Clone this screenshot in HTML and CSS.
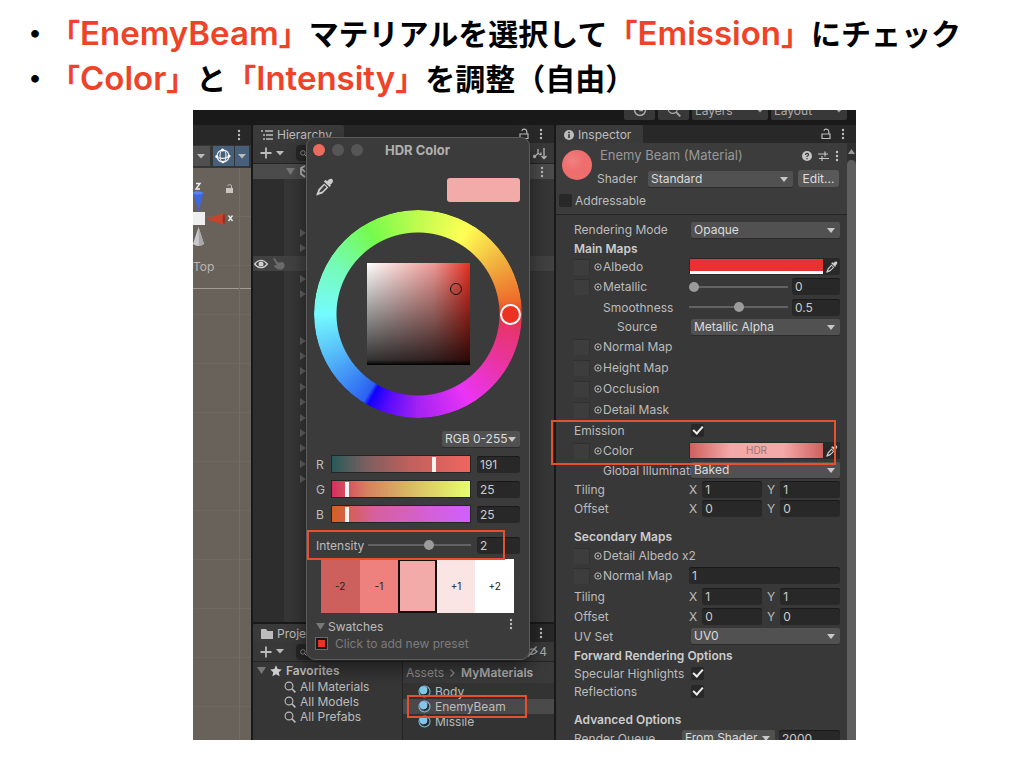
FILE: index.html
```html
<!DOCTYPE html>
<html lang="ja">
<head>
<meta charset="utf-8">
<title>EnemyBeam マテリアル</title>
<link rel="stylesheet" href="styles.css">
</head>
<body>
<svg class="defs" width="0" height="0" aria-hidden="true">
  <symbol id="i-dots" viewBox="0 0 4 12"><circle cx="2" cy="2" r="1.2"/><circle cx="2" cy="6" r="1.2"/><circle cx="2" cy="10" r="1.2"/></symbol>
  <symbol id="i-lock" viewBox="0 0 10 12"><path d="M1 6h8v4.5H1zM7.8 6V3.6a2.6 2.6 0 0 0-5-.8" fill="none" stroke="currentColor" stroke-width="1.2"/></symbol>
  <symbol id="i-search" viewBox="0 0 12 12"><circle cx="5" cy="5" r="3.9" fill="none" stroke="currentColor" stroke-width="1.1"/><path d="M7.8 7.8 11.4 11.4" stroke="currentColor" stroke-width="1.6"/></symbol>
  <symbol id="i-plus" viewBox="0 0 12 12"><path d="M6 .5v11M.5 6h11" stroke="currentColor" stroke-width="1.8"/></symbol>
  <symbol id="i-down" viewBox="0 0 8 5"><path d="M0 0h8L4 4.6z"/></symbol>
  <symbol id="i-fold" viewBox="0 0 9 7"><path d="M0 0h9L4.500 7z"/></symbol>
  <symbol id="i-pipette" viewBox="0 0 16 16"><path d="M10.2 2.600c1.400-1.800 3-2.400 4.200-1.600 1.200 1 .9 2.900-1.200 4.500l-.6.5.7.8-1.300 1.300-5-5L8.300 1.800z"/><path d="M7.300 4.800 2.500 9.600C1.400 10.800 2 12 .6 13.800L.3 15.500l1.800-.3c1.600-1.400 3-.8 4-1.900L11 8.500 7.300 4.800zM7.500 6.500 9.300 8.300 5.400 12c-.8.6-1.800.4-2.400.8.3-.8.200-1.600.9-2.200z" fill-rule="evenodd"/></symbol>
  <symbol id="i-pick" viewBox="0 0 8 8"><circle cx="4" cy="4" r="3.2" fill="none" stroke="currentColor"/><circle cx="4" cy="4" r="1"/></symbol>
  <symbol id="i-ball" viewBox="0 0 14 14"><circle cx="7" cy="7" r="6" fill="none" stroke="#7db9dc" stroke-width="1.1"/><circle cx="6" cy="5.600" r="4.300" fill="#86c5ea"/><path d="M10.800 4.500c.8 3-1 6-4.300 6.300" fill="none" stroke="#222" stroke-width="1.200"/></symbol>
</svg>

<main class="slide">
  <ul class="points">
    <li><em>「<span class="latin">EnemyBeam</span>」</em>マテリアルを選択して<em>「<span class="latin">Emission</span>」</em>にチェック</li>
    <li><em>「<span class="latin">Color</span>」</em>と<em>「<span class="latin">Intensity</span>」</em>を調整（自由）</li>
  </ul>

  <section class="editor" lang="en">
    <header class="topbar">
      <button class="top-btn" aria-label="History"><svg width="14" height="14" viewBox="0 0 14 14"><circle cx="7" cy="7" r="5.500" fill="none" stroke="currentColor" stroke-width="1.500"/><path d="M7 4v3.500h3" fill="none" stroke="currentColor" stroke-width="1.500"/></svg></button>
      <button class="top-btn" aria-label="Search"><svg width="14" height="14"><use href="#i-search"/></svg></button>
      <button class="top-btn wide">Layers<svg width="8" height="5"><use href="#i-down"/></svg></button>
      <button class="top-btn wide">Layout<svg width="8" height="5"><use href="#i-down"/></svg></button>
    </header>

    <div class="panes">
      <section class="scene">
        <div class="tabbar"><span class="push"></span><svg class="dots" width="4" height="12"><use href="#i-dots"/></svg></div>
        <div class="scene-tools">
          <button class="tool" aria-label="More"><svg width="8" height="5"><use href="#i-down"/></svg></button>
          <button class="tool on" aria-label="Gizmos"><svg width="16" height="16" viewBox="0 0 16 16" fill="none" stroke="#eee" stroke-width="1.100"><circle cx="8" cy="8" r="6"/><ellipse cx="8" cy="8" rx="3" ry="6"/><path d="M1 9c4 2 10 2 14-1"/><g fill="#fff" stroke="none"><circle cx="7.500" cy="2" r="1.500"/><circle cx="1.800" cy="8.500" r="1.500"/><circle cx="14" cy="8" r="1.500"/><circle cx="8" cy="14" r="1.300"/></g></svg></button>
          <button class="tool on narrow" aria-label="Gizmo options"><svg width="8" height="5"><use href="#i-down"/></svg></button>
        </div>
        <div class="viewport">
          <svg class="gizmo" width="58" height="82" viewBox="0 0 58 82">
            <path d="M3 15.500 7 15.500 3 21 7 21" fill="none" stroke="#eee" stroke-width="1.400"/>
            <path d="M0 24.500Q5 22 10.500 25L5.500 43Z" fill="#3d69e0"/><path d="M0 24.500Q5 22 10.500 25 5 28 0 25z" fill="#5a83f0"/>
            <path d="M0 44h12v13H0z" fill="#efefef"/>
            <path d="M13 51 31 45Q34 51 31 57Z" fill="#c8432b"/><path d="M31 45Q34 51 31 57 28 51 31 45z" fill="#953323"/>
            <path d="M35.500 47.500 39.500 53M39.500 47.500 35.500 53" stroke="#eee" stroke-width="1.300"/>
            <path d="M5.500 59 11 76Q5 80 0 76Z" fill="#c9c9c9"/><path d="M5.500 59 11 76Q8 78 6 78z" fill="#a8a8a8"/>
            <path d="M33 20h7v5h-7z" fill="#c9c6c2"/><path d="M34.500 17.500q2.500-2 4 0V20" fill="none" stroke="#bbb" stroke-width="1"/>
          </svg>
          <span class="view-name">Top</span>
        </div>
      </section>

      <div class="middle">
        <section class="hierarchy">
          <div class="tabbar">
            <div class="tab hier-tab"><svg width="12" height="10" viewBox="0 0 12 10"><path d="M0 1h2M4 1h8M2 5h2M5 5h7M2 9h2M5 9h7" stroke="currentColor" stroke-width="1.300"/></svg>Hierarchy</div>
            <span class="push"></span>
            <svg width="10" height="12"><use href="#i-lock"/></svg>
            <svg class="dots" width="4" height="12"><use href="#i-dots"/></svg>
          </div>
          <div class="toolbar">
            <svg width="12" height="12"><use href="#i-plus"/></svg><svg width="8" height="5"><use href="#i-down"/></svg>
            <span class="searchbox"><svg width="7" height="7"><use href="#i-search"/></svg></span>
            <svg width="14" height="13" viewBox="0 0 14 13" fill="none" stroke="currentColor" stroke-width="1.300"><path d="M1.500 9.500 5 6.500V2M5 6.500l3 1.500M8 5.500V8M11 1v10M8.500 9l2.500 2.500L13.500 9"/><circle cx="1.500" cy="9.500" r="1" fill="currentColor"/></svg>
          </div>
          <div class="scene-row"><svg width="9" height="7"><use href="#i-fold"/></svg><svg width="13" height="13" viewBox="0 0 13 13" fill="none" stroke="#bbb" stroke-width="1.700"><path d="M6 1 2 3v6l4 3M2 3l4 4"/></svg><span class="push"></span><svg class="dots" width="4" height="12"><use href="#i-dots"/></svg></div>
          <div class="tree">
            <i></i><i></i><i></i><i class="arr"></i><i class="arr"></i>
            <i class="hot"><svg width="14" height="10" viewBox="0 0 14 10"><path d="M.5 5Q7-2.500 13.500 5 7 12.500.5 5z" fill="none" stroke="#d0d0d0" stroke-width="1.200"/><circle cx="7" cy="5" r="2.500" fill="#d0d0d0"/></svg><svg width="13" height="12" viewBox="0 0 13 12"><path d="M1 .5 2.500 0 6 4.500 10.500 4 12.500 6v3L10 11.500H6L2 8.500 2.500 7 5 7.500z" fill="#6a6a6a"/></svg></i>
            <i class="arr"></i><i class="arr"></i><i></i><i></i>
            <i class="arr"></i><i class="arr"></i><i class="arr"></i><i class="arr"></i><i class="arr"></i>
            <i class="arr"></i><i class="arr"></i><i class="arr"></i><i class="arr"></i><i class="arr"></i>
          </div>
        </section>

        <section class="project">
          <div class="tabbar">
            <div class="tab proj-tab"><svg width="12" height="10" viewBox="0 0 12 10"><path d="M0 0h5l1.500 2H12v8H0z"/></svg>Project</div>
            <span class="push"></span>
            <svg class="dots" width="4" height="12"><use href="#i-dots"/></svg>
          </div>
          <div class="toolbar">
            <svg width="12" height="12"><use href="#i-plus"/></svg><svg width="8" height="5"><use href="#i-down"/></svg>
            <span class="searchbox"><svg width="7" height="7"><use href="#i-search"/></svg></span>
            <span class="hidden-count"><svg width="12" height="11" viewBox="0 0 12 11" fill="none" stroke="currentColor" stroke-width="1.300"><path d="M1 6Q6 0 11 5.500 6 11 1 6zM2 10.500 10.500.5"/></svg>4</span>
          </div>
          <div class="browser">
            <ul class="favorites">
              <li class="fav-head"><svg width="9" height="7"><use href="#i-fold"/></svg><svg class="star" width="12" height="12" viewBox="0 0 12 12"><path d="M6 .3 7.700 4l4.100.5-3 2.800.8 4L6 9.300l-3.600 2 .8-4-3-2.800L4.300 4z"/></svg>Favorites</li>
              <li><svg width="12" height="12"><use href="#i-search"/></svg>All Materials</li>
              <li><svg width="12" height="12"><use href="#i-search"/></svg>All Models</li>
              <li><svg width="12" height="12"><use href="#i-search"/></svg>All Prefabs</li>
            </ul>
            <div class="assets">
              <nav class="crumbs"><span>Assets</span><svg width="5" height="8" viewBox="0 0 5 8"><path d="M.5.5 4 4 .5 7.500" fill="none" stroke="currentColor" stroke-width="1.200"/></svg><b>MyMaterials</b></nav>
              <ul class="files">
                <li><svg width="13" height="13"><use href="#i-ball"/></svg>Body</li>
                <li class="selected"><svg width="13" height="13"><use href="#i-ball"/></svg>EnemyBeam<span class="mark"></span></li>
                <li><svg width="13" height="13"><use href="#i-ball"/></svg>Missile</li>
              </ul>
            </div>
          </div>
        </section>
      </div>

      <section class="inspector">
        <div class="tabbar">
          <div class="tab insp-tab"><svg width="10" height="10" viewBox="0 0 10 10"><circle cx="5" cy="5" r="5"/><path d="M5 4.300V8M5 1.800v1.500" stroke="#333" stroke-width="1.600"/></svg>Inspector</div>
          <span class="push"></span>
          <svg width="10" height="12"><use href="#i-lock"/></svg>
          <svg class="dots" width="4" height="12"><use href="#i-dots"/></svg>
        </div>
        <div class="insp-body">
          <div class="insp-main">
            <header class="mat-head">
              <span class="preview"></span>
              <div class="mat-info">
                <div class="mat-title">Enemy Beam (Material)<span class="push"></span>
                  <svg width="10" height="10" viewBox="0 0 10 10"><circle cx="5" cy="5" r="5"/><path d="M3.400 3.800Q3.600 2.300 5 2.300T6.600 3.800Q6.600 4.600 5 5.300V6M5 7v1.300" fill="none" stroke="#333" stroke-width="1.200"/></svg>
                  <svg width="11" height="10" viewBox="0 0 11 10"><path d="M0 3h10M7 .5v5M1 7.500h10M4 5v5" stroke="currentColor" stroke-width="1.200"/></svg>
                  <svg width="4" height="12"><use href="#i-dots"/></svg>
                </div>
                <div class="shader"><label for="shader">Shader</label><span class="select"><select id="shader"><option>Standard</option></select></span><button class="edit">Edit...</button></div>
              </div>
              <label class="addr"><input type="checkbox" class="check">Addressable</label>
            </header>

            <form class="props">
              <div class="row"><label class="name" for="mode">Rendering Mode</label><span class="select"><select id="mode"><option>Opaque</option></select></span></div>
              <h3 class="row tight">Main Maps</h3>
              <div class="row"><span class="name map"><i class="slot"></i><svg width="8" height="8"><use href="#i-pick"/></svg>Albedo</span><span class="color"><span class="fill albedo"></span><svg width="12" height="12"><use href="#i-pipette"/></svg></span></div>
              <div class="row maprow"><label class="name map" for="metal"><i class="slot"></i><svg width="8" height="8"><use href="#i-pick"/></svg>Metallic</label><input id="metal" type="range" class="slider" min="0" max="1" step="0.1" value="0"><input class="num" value="0" aria-label="Metallic value"></div>
              <div class="row tall"><label class="name sub" for="smooth">Smoothness</label><input id="smooth" type="range" class="slider" min="0" max="1" step="0.1" value="0.5"><input class="num" value="0.5" aria-label="Smoothness value"></div>
              <div class="row"><label class="name subsub" for="src">Source</label><span class="select"><select id="src"><option>Metallic Alpha</option></select></span></div>
              <div class="row maprow"><span class="name map"><i class="slot"></i><svg width="8" height="8"><use href="#i-pick"/></svg>Normal Map</span></div>
              <div class="row maprow"><span class="name map"><i class="slot"></i><svg width="8" height="8"><use href="#i-pick"/></svg>Height Map</span></div>
              <div class="row maprow"><span class="name map"><i class="slot"></i><svg width="8" height="8"><use href="#i-pick"/></svg>Occlusion</span></div>
              <div class="row maprow"><span class="name map"><i class="slot"></i><svg width="8" height="8"><use href="#i-pick"/></svg>Detail Mask</span></div>
              <div class="emission">
                <div class="row maprow"><label class="name" for="emis">Emission</label><input id="emis" type="checkbox" class="check" checked></div>
                <div class="row"><span class="name map"><i class="slot"></i><svg width="8" height="8"><use href="#i-pick"/></svg>Color</span><span class="color"><span class="fill hdr">HDR</span><svg width="12" height="12"><use href="#i-pipette"/></svg></span></div>
                <span class="mark"></span>
              </div>
              <div class="row tall"><label class="name sub" for="gi">Global Illuminati</label><span class="select"><select id="gi"><option>Baked</option></select></span></div>
              <div class="row"><span class="name">Tiling</span><label class="axis">X<input class="num" value="1"></label><label class="axis">Y<input class="num" value="1"></label></div>
              <div class="row"><span class="name">Offset</span><label class="axis">X<input class="num" value="0"></label><label class="axis">Y<input class="num" value="0"></label></div>
              <h3 class="row spaced">Secondary Maps</h3>
              <div class="row"><span class="name map"><i class="slot"></i><svg width="8" height="8"><use href="#i-pick"/></svg>Detail Albedo x2</span></div>
              <div class="row maprow"><label class="name map" for="nm2"><i class="slot"></i><svg width="8" height="8"><use href="#i-pick"/></svg>Normal Map</label><input id="nm2" class="num full" value="1"></div>
              <div class="row tall"><span class="name">Tiling</span><label class="axis">X<input class="num" value="1"></label><label class="axis">Y<input class="num" value="1"></label></div>
              <div class="row tall"><span class="name">Offset</span><label class="axis">X<input class="num" value="0"></label><label class="axis">Y<input class="num" value="0"></label></div>
              <div class="row tall"><label class="name" for="uv">UV Set</label><span class="select"><select id="uv"><option>UV0</option></select></span></div>
              <h3 class="row tight">Forward Rendering Options</h3>
              <div class="row tight"><label class="name" for="spec">Specular Highlights</label><input id="spec" type="checkbox" class="check" checked></div>
              <div class="row"><label class="name" for="refl">Reflections</label><input id="refl" type="checkbox" class="check" checked></div>
              <h3 class="row spaced">Advanced Options</h3>
              <div class="row tight"><label class="name queue" for="rq">Render Queue</label><span class="select"><select id="rq"><option>From Shader</option></select></span><input class="num" value="2000" aria-label="Queue value"></div>
            </form>
          </div>
          <div class="scroll"><svg width="7" height="5" viewBox="0 0 7 5"><path d="M0 5h7L3.500 0z"/></svg><span class="thumb"></span></div>
        </div>
      </section>
    </div>

    <section class="picker" aria-label="HDR Color">
      <header class="titlebar"><i class="light close"></i><i class="light"></i><i class="light"></i><h2>HDR Color</h2></header>
      <div class="current"><svg width="18" height="18"><use href="#i-pipette"/></svg><span class="chip"></span></div>
      <div class="wheel"><span class="ring"></span><span class="sv"><i class="sv-dot"></i></span><i class="hue-dot"></i></div>
      <span class="select rgb-mode"><select aria-label="Color mode"><option>RGB 0-255</option></select></span>
      <div class="channel"><label for="r">R</label><input id="r" type="range" class="bar bar-r" min="0" max="255" value="191"><input class="num" value="191" aria-label="Red"></div>
      <div class="channel"><label for="g">G</label><input id="g" type="range" class="bar bar-g" min="0" max="255" value="25"><input class="num" value="25" aria-label="Green"></div>
      <div class="channel"><label for="b">B</label><input id="b" type="range" class="bar bar-b" min="0" max="255" value="25"><input class="num" value="25" aria-label="Blue"></div>
      <div class="channel intensity"><label for="int">Intensity</label><input id="int" type="range" class="slider" min="-10" max="10" value="2"><input class="num" value="2" aria-label="Intensity value"><span class="mark"></span></div>
      <div class="stops"><button class="s1">-2</button><button class="s2">-1</button><button class="s3" aria-label="0"></button><button class="s4">+1</button><button class="s5">+2</button></div>
      <div class="swatch-head"><svg width="9" height="7"><use href="#i-fold"/></svg>Swatches<span class="push"></span><svg class="dots" width="4" height="12"><use href="#i-dots"/></svg></div>
      <div class="preset"><i class="preset-box"></i>Click to add new preset</div>
    </section>
  </section>
</main>
</body>
</html>
```
FILE: styles.css
```css
* { box-sizing: border-box; }
body { margin: 0; background: #fff; }
.defs { position: absolute; }
svg { display: block; flex: none; }
svg:not([fill]) { fill: currentColor; }
i { font-style: normal; }
button, input, select { font: inherit; color: inherit; border: 0; margin: 0; padding: 0; background: none; }
h2, h3, ul { margin: 0; padding: 0; }
.push { flex: 1; }

.slide { height: 100vh; display: flex; flex-direction: column; padding: 10px 168px 28px 193px; }
.points {
  list-style: none; margin: 0 -168px 10px -193px; padding-left: 20px;
  font: 700 30px/45px "Noto Sans CJK JP", sans-serif; color: #000; white-space: nowrap;
}
.points li { display: flex; height: 45px; align-items: baseline; }
.points li::before { content: "・"; width: 30px; }
.points em { font-style: normal; color: #ee4328; }
.latin { font-family: Inter, "Liberation Sans", sans-serif; font-size: 33px; font-weight: 600; }

.editor {
  position: relative; flex: 1; min-height: 0; display: flex; flex-direction: column;
  background: #191919; color: #bcbcbc; font: 12px/15px Inter, sans-serif;
}
.topbar { height: 15px; overflow: hidden; display: flex; justify-content: flex-end; align-items: flex-end; gap: 3px; padding: 0 9px 5px; flex: none; background: #191919; }
.top-btn { height: 20px; width: 31px; flex: none; background: #383838; border-radius: 2px; display: flex; align-items: center; justify-content: center; color: #aaa; }
.top-btn.wide { width: 76px; justify-content: space-between; padding: 0 4px 0 3px; }

.panes { flex: 1; min-height: 0; display: grid; grid-template-columns: 58px minmax(0, 1fr) 300px; gap: 2px; overflow: hidden; }
.panes > * { min-height: 0; }
.scene, .middle { overflow: hidden; }
.tabbar { height: 18px; flex: none; display: flex; align-items: center; background: #282828; }
.tabbar .dots { margin: 0 11px 0 10px; }
.tab { height: 18px; display: flex; align-items: center; gap: 4px; padding: 1px 8px 0; background: #3a3a3a; border-radius: 2px 2px 0 0; }
.hier-tab, .insp-tab { padding-right: 12px; }
.toolbar { height: 21px; flex: none; display: flex; align-items: center; gap: 4px; padding: 0 7px; background: #383838; border-bottom: 1px solid #242424; }
.searchbox { flex: 1; height: 16px; margin-left: 8px; padding: 5px 4px; background: #262626; border-radius: 4px; }

.scene { display: flex; flex-direction: column; background: #6a635b; }
.scene .tabbar { height: 20px; }
.scene .tabbar .dots { margin-right: 10px; }
.scene-tools { display: flex; height: 23px; padding: 1px 2px 2px 0; background: #353535; }
.tool { display: flex; align-items: center; justify-content: center; width: 17px; background: #505050; }
.tool.on { background: #46607c; width: 22px; margin-left: 3px; }
.tool.on.narrow { width: 14px; margin-left: 1px; }
.viewport {
  flex: 1;
  background: linear-gradient(#736d66, #736d66) 46px 0 / 1px 100% no-repeat,
    linear-gradient(#a09b94, #a09b94) 0 120px / 100% 1px no-repeat,
    repeating-linear-gradient(#69625a 0 48px, #6e6860 48px 49px);
}
.view-name { display: block; color: #b9b5b0; padding-top: 9px; }

.middle { display: flex; flex-direction: column; gap: 2px; }
.hierarchy { flex: 1; min-height: 0; display: flex; flex-direction: column; background: linear-gradient(90deg, #2d2d2d 31px, #363636 31px); }
.scene-row { height: 15px; flex: none; display: flex; align-items: center; gap: 4px; padding-left: 33px; background: #4b4b4b; color: #777; }
.scene-row .dots { margin-right: 10px; color: #bbb; }
.tree { display: grid; grid-template-rows: repeat(20, 1fr); height: 308px; flex: none; }
.tree i { display: flex; align-items: center; gap: 4px; padding-left: 1px; }
.tree .arr::before { content: ""; margin-left: 46px; border: 4px solid transparent; border-left: 6px solid #626262; border-right: 0; }
.tree .hot { background: #414141; }

.project { height: 116px; flex: none; display: flex; flex-direction: column; }
.project .toolbar { height: 20px; }
.hidden-count { display: flex; align-items: center; gap: 1px; color: #aaa; }
.browser { flex: 1; min-height: 0; display: grid; grid-template-columns: 149px minmax(0, 1fr); gap: 1px; background: #242424; }
.favorites, .files { list-style: none; }
.favorites { background: #363636; }
.favorites li { height: 15px; display: flex; align-items: center; gap: 4px; padding-left: 31px; }
.favorites .fav-head { height: 17px; padding-left: 4px; font-weight: 600; }
.fav-head svg:first-child { color: #777; }
.fav-head .star { color: #ccc; }
.assets { background: #333; }
.crumbs { height: 21px; display: flex; align-items: center; gap: 6px; padding-left: 3px; background: #3a3a3a; color: #909090; }
.crumbs b { font-weight: 600; color: #b0b0b0; }
.files { padding-top: 1px; }
.files li { position: relative; height: 15px; display: flex; align-items: center; gap: 4px; padding-left: 15px; }
.files .selected { background: #4a4a4a; }
.mark { position: absolute; z-index: 1; border: 2px solid #e5512f; pointer-events: none; }
.files .mark { left: 4px; width: 120px; top: -4px; bottom: -4px; }

.inspector { display: flex; flex-direction: column; background: #383838; }
.insp-body { flex: 1; min-height: 0; display: grid; grid-template-columns: minmax(0, 1fr) 9px; }
.mat-head { height: 72px; display: grid; grid-template-columns: 30px minmax(0, 1fr); grid-template-rows: 48px 18px; column-gap: 8px; padding: 0 8px 0 6px; background: #3c3c3c; border-bottom: 1px solid #242424; }
.preview { width: 30px; height: 30px; margin-top: 7px; border-radius: 50%; background: radial-gradient(circle at 35% 35%, #f28080, #ee6e6e 40%); }
.mat-title { height: 25px; display: flex; align-items: center; gap: 6px; font-size: 13px; color: #989898; }
.mat-title svg { color: #c4c4c4; }
.shader { display: flex; align-items: center; height: 21px; gap: 5px; margin-left: -3px; }
.shader label { width: 46px; }
.edit { width: 41px; height: 17px; background: #585858; border-radius: 3px; color: #ddd; }
.addr { grid-column: 1 / -1; display: flex; align-items: center; gap: 3px; margin-left: -3px; }

.select { position: relative; flex: 1; height: 16px; margin-left: 2px; background: #515151; border-radius: 2px; box-shadow: 0 1px #2c2c2c; color: #dcdcdc; }
.select select { appearance: none; width: 100%; height: 16px; padding: 0 3px; line-height: 16px; display: block; }
.select::after { content: ""; position: absolute; right: 5px; top: 6px; border: 4px solid transparent; border-top: 5px solid #c8c8c8; border-bottom: 0; }
.shader .select { margin: 0; }
.check { appearance: none; flex: none; width: 13px; height: 13px; margin-left: 2px; background: #282828; border-radius: 2px; display: grid; place-items: center; }
.addr .check { margin: 0; }
.check:checked::before { content: ""; width: 8px; height: 4px; margin-bottom: 3px; border: solid #eee; border-width: 0 0 2px 2px; transform: rotate(-48deg); }
.num { width: 48px; height: 17px; min-width: 0; padding: 0 3px; background: #282828; border-radius: 3px; box-shadow: inset 0 1px #1a1a1a; color: #ccc; }
.slider { appearance: none; flex: 1; min-width: 0; height: 12px; background: linear-gradient(#626262, #626262) center / 100% 2px no-repeat; }
.slider::-webkit-slider-thumb { appearance: none; width: 10px; height: 10px; border-radius: 50%; background: #9b9b9b; }

.props { padding: 5px 7px 0 18px; }
.row { height: 19px; display: flex; align-items: center; }
h3.row { font-size: 12px; font-weight: 600; color: #ccc; }
.row.tight { height: 18px; }
.row.tall { height: 20px; }
.row.maprow { height: 21px; }
.row.spaced { height: 28px; padding-top: 8px; }
.name { flex: none; width: 115px; white-space: nowrap; }
.name.sub { padding-left: 29px; }
.name.subsub { padding-left: 43px; }
.name.queue { width: 106px; }
.name.map { display: flex; align-items: center; gap: 1px; }
.slot { flex: none; width: 16px; height: 16px; margin-right: 3px; background: #3d3d3d; border-top: 1px solid #303030; border-right: 1px solid #333; }
.row .slider + .num { margin-left: 4px; }
.row .queue ~ .num { width: 61px; margin-left: 4px; }
.num.full { flex: 1; }
.axis { flex: 1; display: flex; align-items: center; gap: 5px; }
.axis + .axis { margin-left: 5px; }
.axis .num { flex: 1; }
.color { flex: 1; height: 17px; display: flex; align-items: center; padding: 1px 2px 1px 1px; gap: 3px; background: #292929; border-radius: 2px; }
.color svg { color: #ccc; }
.fill { flex: 1; height: 15px; }
.albedo { background: #e83232; border-bottom: 3px solid #fff; }
.hdr { background: linear-gradient(90deg, #d0605e, #f3a9a8 30%, #f3a9a8 70%, #d0605e); color: #a07474; font-size: 10px; text-align: center; }
.emission { position: relative; }
.emission .mark { left: -23px; right: 4px; top: 0; bottom: -5px; }
.scroll { background: #303030; display: flex; flex-direction: column; align-items: center; padding-top: 6px; color: #999; }
.thumb { width: 9px; flex: 1; margin-top: 6px; background: #5f5f5f; border-radius: 5px 5px 0 0; }

.picker {
  position: absolute; z-index: 2; left: 113px; top: 27px; width: 224px; padding: 0 9px 6px;
  background: #3b3b3b; border: 1px solid #5c5c5c; border-radius: 9px; box-shadow: 0 8px 18px 1px rgba(0, 0, 0, .45);
}
.titlebar { height: 24px; display: flex; align-items: center; gap: 7px; margin-left: -3px; }
.light { width: 12px; height: 12px; border-radius: 50%; background: #565656; }
.light.close { background: #ed6a5e; }
.titlebar h2 { flex: 1; padding-left: 15px; font-size: 13px; font-weight: 700; color: #b0b0b0; }
.current { display: flex; justify-content: space-between; margin-top: 16px; height: 24px; }
.current svg { color: #ccc; }
.chip { width: 73px; background: #f3abaa; border-radius: 3px; }
.wheel { position: relative; width: 208px; height: 208px; margin: 8px -2px 13px; display: grid; place-items: center; }
.ring {
  grid-area: 1 / 1; width: 208px; height: 208px; border-radius: 50%;
  background: conic-gradient(from 90deg, #ec3424, #e6346c 8deg, #ea34a0 30deg, #ea34f6 60deg, #a422f2 90deg, #5a0cfa 108deg, #1000ff 119deg, #2a62f2 122deg, #50b0f8 150deg, #75fbfd 180deg, #75fbb8 210deg, #75fb4c 240deg, #c0fb50 270deg, #ffff54 300deg, #f0a83c 330deg, #ee6c2c 352deg, #ec3424 360deg);
  mask: radial-gradient(circle, transparent 81px, #000 82px);
}
.sv { grid-area: 1 / 1; position: relative; width: 103px; height: 102px; background: linear-gradient(transparent, rgba(0, 0, 0, .5) 60%, rgba(0, 0, 0, .8) 95%, #000), linear-gradient(90deg, #fff, #ef9a96 65%, #e62f22); }
.sv-dot { position: absolute; right: 8px; top: 20px; width: 12px; height: 12px; border: 1px solid #111; border-radius: 50%; }
.hue-dot { position: absolute; right: 1px; top: 94px; width: 21px; height: 21px; border: 2px solid #fff; border-radius: 50%; background: #ec3323; }
.rgb-mode { display: block; width: 78px; margin: 0 0 8px auto; }
.rgb-mode select { padding: 0 3px; }
.rgb-mode::after { right: 4px; }
.channel { position: relative; height: 18px; display: flex; align-items: center; gap: 6px; margin-bottom: 7px; }
.channel label { width: 9px; }
.channel .num { width: 43px; }
.bar { appearance: none; flex: 1; min-width: 0; height: 18px; border: 1px solid #242424; }
.bar::-webkit-slider-thumb { appearance: none; width: 4px; height: 15px; background: #f4f4f4; }
.bar-r { background: linear-gradient(90deg, #28595a, #7c5f5f 25%, #bd605d 55%, #f06560); }
.bar-g { background: linear-gradient(90deg, #d52e5e, #d58060 25%, #dcc865 65%, #e6ff70); }
.bar-b { background: linear-gradient(90deg, #d56022, #d6609c 30%, #d060ff); }
.channel.intensity { margin-top: 13px; margin-bottom: 5px; }
.intensity label { width: 46px; }
.intensity .mark { left: -9px; right: 15px; top: -6px; bottom: -6px; }
.stops { display: grid; grid-template-columns: repeat(5, 1fr); height: 54px; margin: 0 6px 5px 5px; }
.stops button { font-size: 10px; color: #222; }
.s1 { background: #cd605d; }
.s2 { background: #ee807d; }
.stops .s3 { background: #f3abaa; border: 2px solid #111; }
.s4 { background: #fbe4e4; }
.s5 { background: #fff; }
.swatch-head { display: flex; align-items: center; gap: 3px; height: 16px; }
.swatch-head svg:first-child { color: #777; }
.swatch-head .dots { margin-right: 7px; align-self: flex-start; }
.preset { display: flex; align-items: center; gap: 8px; height: 19px; color: #7c7c7c; }
.preset-box { width: 11px; height: 11px; background: #ec3323; border: 2px solid #191919; outline: 1px solid #6a6a6a; }
```
